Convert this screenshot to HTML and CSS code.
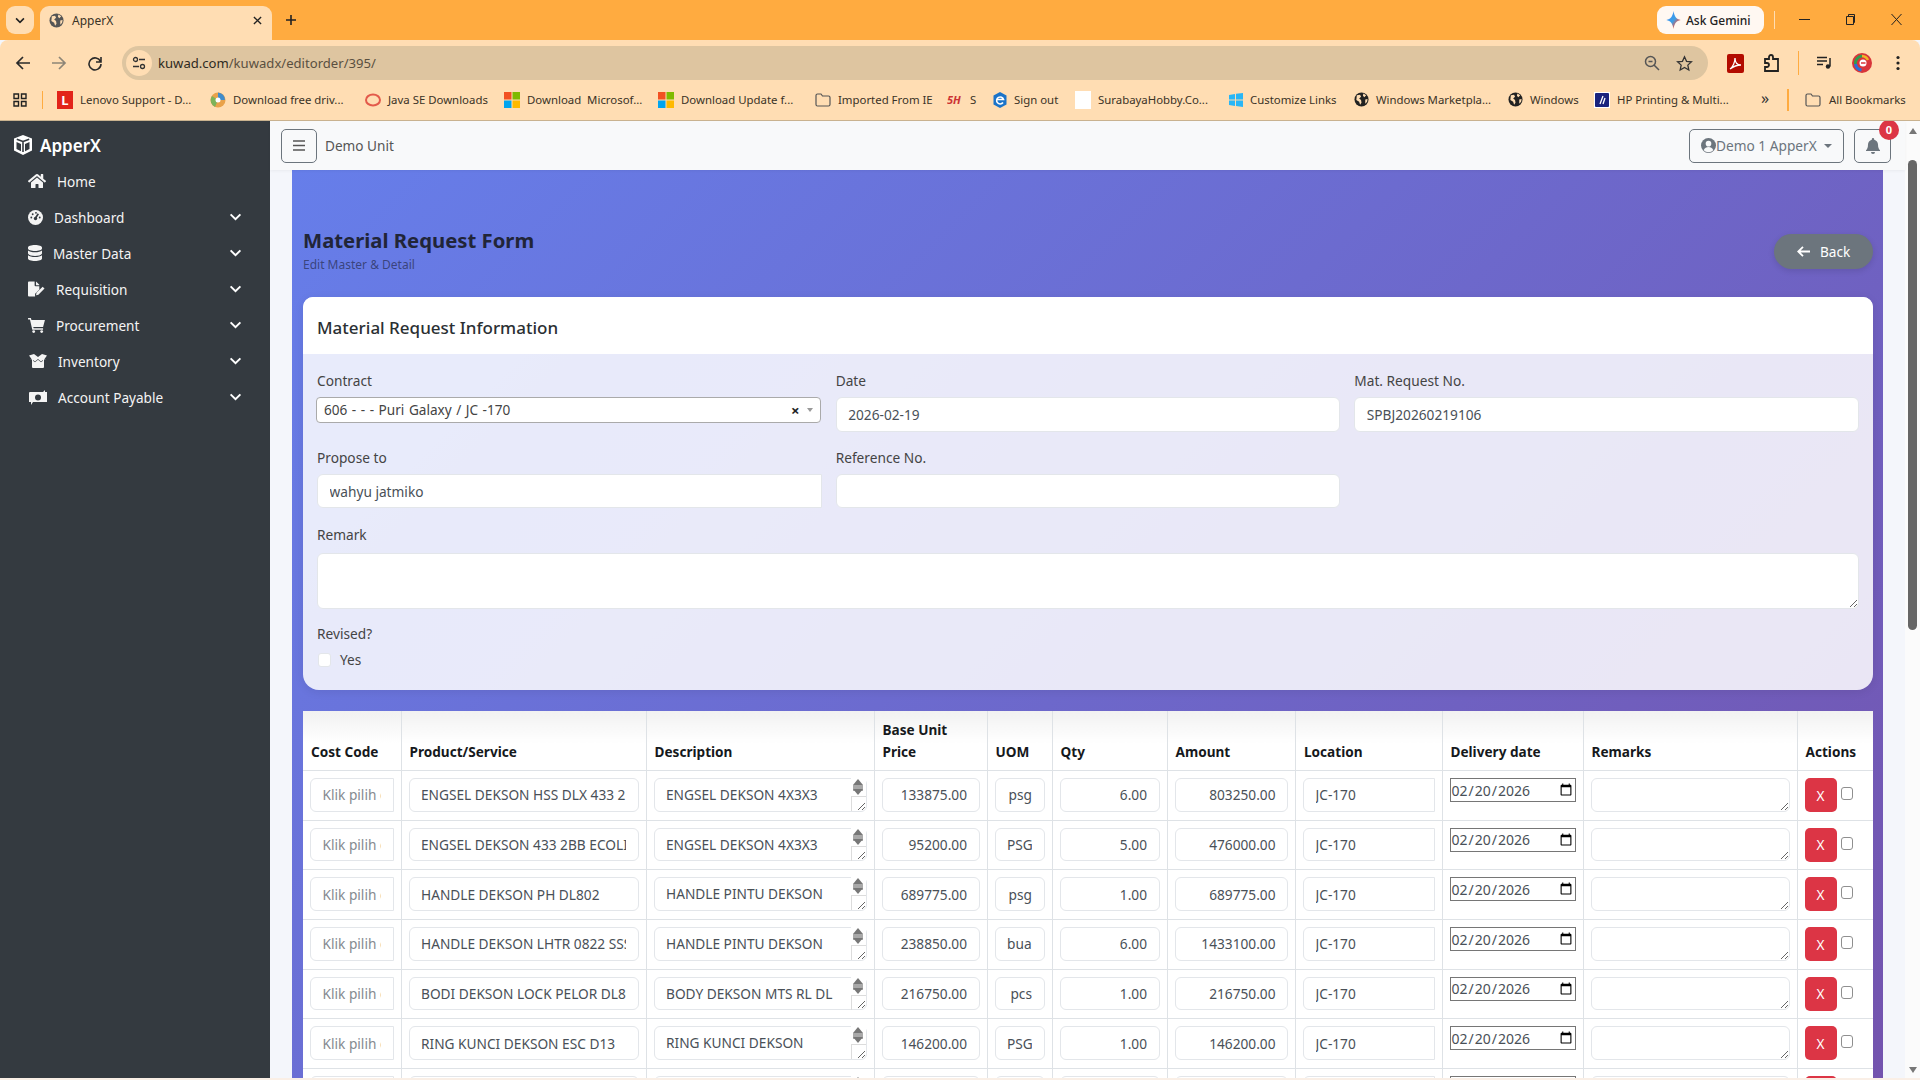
FILE: index.html
```html
<!DOCTYPE html>
<html lang="en">
<head>
<meta charset="utf-8">
<title>ApperX</title>
<link rel="stylesheet" href="styles.css">
</head>
<body>
<svg class="defs" width="0" height="0">
  <symbol id="chev" viewBox="0 0 14 9"><path d="M1.5 1.5 7 7l5.5-5.5" fill="none" stroke="currentColor" stroke-width="2.2"/></symbol>
  <symbol id="globe" viewBox="0 0 16 16"><circle cx="8" cy="8" r="7.5" fill="currentColor"/><path d="M3 3.5 6.5 3l1 2-2 2 2 1.500.5 3-1.500 2-1-3-3-2zM10 1.500l3 2-2 2-1.500-1.500zM12 8l2.500-.5-.5 3-2 2z" fill="#ffddb3"/></symbol>
  <symbol id="ms" viewBox="0 0 16 16"><path fill="#f25022" d="M0 0h7.500v7.500H0z"/><path fill="#7fba00" d="M8.500 0H16v7.500H8.500z"/><path fill="#00a4ef" d="M0 8.500h7.500V16H0z"/><path fill="#ffb900" d="M8.500 8.500H16V16H8.500z"/></symbol>
  <symbol id="folder" viewBox="0 0 16 14"><path d="M1 2.500A1.500 1.500 0 0 1 2.500 1H6l1.500 2h6A1.500 1.500 0 0 1 15 4.500v7a1.500 1.500 0 0 1-1.500 1.500h-11A1.500 1.500 0 0 1 1 11.500z" fill="none" stroke="currentColor" stroke-width="1.200"/></symbol>
</svg>

<header class="tabstrip">
  <button class="tablist" type="button"><svg width="10" height="7" viewBox="0 0 14 9"><use href="#chev"/></svg></button>
  <div class="tab">
    <svg class="tab-fav" width="15" height="15"><use href="#globe"/></svg>
    <span class="tab-title">ApperX</span>
    <svg class="tab-close" width="9" height="9" viewBox="0 0 10 10"><path d="M1 1l8 8M9 1 1 9" stroke="#222" stroke-width="1.500"/></svg>
  </div>
  <svg class="tab-new" width="12" height="12" viewBox="0 0 12 12"><path d="M6 1v10M1 6h10" stroke="#222" stroke-width="1.600"/></svg>
  <div class="gemini">
    <svg width="15" height="18" viewBox="0 0 16 20"><defs><linearGradient id="gem" x1="0" y1="0" x2="1" y2="1"><stop offset="0" stop-color="#4285f4"/><stop offset=".5" stop-color="#3aa0e8"/><stop offset=".75" stop-color="#e8584a"/><stop offset="1" stop-color="#f4b400"/></linearGradient></defs><path d="M8 0c1 6 3 9 8 10-5 1-7 4-8 10-1-6-3-9-8-10 5-1 7-4 8-10z" fill="url(#gem)"/></svg>
    <span>Ask Gemini</span>
  </div>
  <i class="vsep"></i>
  <div class="winctl">
    <svg width="11" height="11" viewBox="0 0 11 11"><path d="M0 5.500h11" stroke="#222"/></svg>
    <svg width="11" height="13" viewBox="0 0 11 13"><path d="M1.500 3.500h7v8h-7zM3.500 3.500v-2h6v8H8.500" fill="none" stroke="#222"/></svg>
    <svg width="11" height="13" viewBox="0 0 11 13"><path d="M.5 1l10 11M10.500 1 .5 12" stroke="#222"/></svg>
  </div>
</header>

<div class="toolbar">
  <svg width="16" height="16" viewBox="0 0 16 16"><path d="M8 2 2 8l6 6M2 8h13" fill="none" stroke="#2a2a2a" stroke-width="1.700"/></svg>
  <svg width="16" height="16" viewBox="0 0 16 16"><path d="m8 2 6 6-6 6M14 8H1" fill="none" stroke="#8d8577" stroke-width="1.700"/></svg>
  <svg width="16" height="16" viewBox="0 0 16 16"><path d="M13.500 6.500A6 6 0 1 0 14 9M14 2v5H9" fill="none" stroke="#2a2a2a" stroke-width="1.600"/></svg>
  <div class="omnibox">
    <span class="tune"><svg width="14" height="14" viewBox="0 0 14 14"><circle cx="3.500" cy="3.500" r="2" fill="none" stroke="#333" stroke-width="1.300"/><circle cx="10.500" cy="10.500" r="2" fill="none" stroke="#333" stroke-width="1.300"/><path d="M7 3.500h6M1 10.500h6" stroke="#333" stroke-width="1.300"/></svg></span>
    <span class="url">kuwad.com<span class="url-path">/kuwadx/editorder/395/</span></span>
    <svg class="omni-zoom" width="16" height="16" viewBox="0 0 16 16"><circle cx="6.500" cy="6.500" r="5" fill="none" stroke="#555" stroke-width="1.500"/><path d="m10 10 5 5M4.500 6.500h4" stroke="#555" stroke-width="1.500"/></svg>
    <svg class="omni-star" width="17" height="17" viewBox="0 0 20 20"><path d="m10 2 2.400 5.400 5.800.6-4.300 3.900 1.200 5.700L10 14.700l-5.100 2.900 1.200-5.700L1.800 8l5.800-.6z" fill="none" stroke="#333" stroke-width="1.500"/></svg>
  </div>
  <div class="tb-right">
    <svg width="17" height="19" viewBox="0 0 17 19"><rect width="17" height="19" rx="2" fill="#b30b00"/><path d="M3 15c3-2 5-7 5-11 0 4 2 7 6 7-4 0-7 1-11 4z" fill="none" stroke="#fff" stroke-width="1.300"/></svg>
    <svg width="17" height="19" viewBox="0 0 17 19"><path d="M2 5h4V3a2 2 0 0 1 4 0v2h5v12H2v-4h2a2 2 0 0 0 0-4H2z" fill="none" stroke="#222" stroke-width="1.800"/></svg>
    <i class="vsep tb-sep"></i>
    <svg width="16" height="14" viewBox="0 0 16 14"><path d="M0 1.500h10M0 5h10M0 8.500h6" stroke="#222" stroke-width="1.500"/><path d="M13 2v8.500" stroke="#222" stroke-width="1.500"/><circle cx="11" cy="10.500" r="2.200" fill="#222"/></svg>
    <svg width="20" height="20" viewBox="0 0 20 20"><circle cx="10" cy="10" r="10" fill="#d8343a"/><path d="M3.500 11A7 7 0 0 1 10 3" stroke="#2e9e4f" stroke-width="3" fill="none"/><path d="M3.500 11a7 7 0 0 0 6 6" stroke="#2b6fd6" stroke-width="3" fill="none"/><path d="M10 3a7 7 0 0 1 6 4" stroke="#f0b429" stroke-width="2.500" fill="none"/><circle cx="11" cy="10" r="3.500" fill="#fff"/><path d="M9 10h4.500" stroke="#d8343a" stroke-width="1.500"/></svg>
    <svg class="tb-menu" width="4" height="16" viewBox="0 0 4 16"><circle cx="2" cy="2.500" r="1.600" fill="#222"/><circle cx="2" cy="8" r="1.600" fill="#222"/><circle cx="2" cy="13.500" r="1.600" fill="#222"/></svg>
  </div>
</div>

<nav class="bookmarks">
  <svg class="bm-apps" width="14" height="14" viewBox="0 0 14 14"><path d="M1 1h4.500v4.500H1zM8.500 1H13v4.500H8.500zM1 8.500h4.500V13H1zM8.500 8.500H13V13H8.500z" fill="none" stroke="#222" stroke-width="1.400"/></svg>
  <i class="vsep bm-sep"></i>
  <div class="bm-grid">
    <a class="bm"><b class="ic-l">L</b>Lenovo Support - D...</a>
    <a class="bm"><svg width="16" height="18" viewBox="0 0 16 18"><circle cx="8" cy="9" r="7.500" fill="#e9a24a"/><path d="M8 1.500A7.500 7.500 0 0 1 15 9L8 9z" fill="#3f8ccc"/><path d="M2 5a7.500 7.500 0 0 0 3 11l3-7z" fill="#7db35a"/><circle cx="8" cy="9" r="2.500" fill="#fff"/></svg>Download free driv...</a>
    <a class="bm"><svg width="16" height="16" viewBox="0 0 16 16"><ellipse cx="8" cy="8" rx="7" ry="5.500" fill="none" stroke="#e35a4b" stroke-width="2"/></svg>Java SE Downloads</a>
    <a class="bm"><svg width="16" height="16"><use href="#ms"/></svg>Download&nbsp; Microsof...</a>
    <a class="bm"><svg width="16" height="16"><use href="#ms"/></svg>Download Update f...</a>
    <a class="bm"><svg width="16" height="14" class="bm-folder"><use href="#folder"/></svg>Imported From IE</a>
    <a class="bm"><b class="ic-s">5H</b>S</a>
    <a class="bm"><svg width="14" height="16" viewBox="0 0 14 16"><path d="M7 0l6.500 3.500v9L7 16 .5 12.500v-9z" fill="#1a73c9"/><path d="M10 10.500A3.500 3.500 0 1 1 10.500 7.500H4" fill="none" stroke="#fff" stroke-width="1.600"/></svg>Sign out</a>
    <a class="bm"><i class="ic-white"></i>SurabayaHobby.Co...</a>
    <a class="bm"><svg width="14" height="14" viewBox="0 0 14 14"><path fill="#29b6f6" d="M0 2l6-1v5.500H0zM7 .8 14 0v6.500H7zM0 7.500h6V13l-6-1zM7 7.500h7V14l-7-1z"/></svg>Customize Links</a>
    <a class="bm"><svg width="15" height="15" class="bm-globe"><use href="#globe"/></svg>Windows Marketpla...</a>
    <a class="bm"><svg width="15" height="15" class="bm-globe"><use href="#globe"/></svg>Windows</a>
    <a class="bm"><svg width="16" height="16" viewBox="0 0 16 16"><rect width="16" height="16" fill="#fff"/><rect x="1" y="1" width="14" height="14" rx="1" fill="#1a237e"/><path d="M6 12 9 4M9 12l2-6" stroke="#fff" stroke-width="1.300"/></svg>HP Printing &amp; Multi...</a>
  </div>
  <span class="bm-more">»</span>
  <i class="vsep bm-sep2"></i>
  <a class="bm bm-all"><svg width="16" height="14"><use href="#folder"/></svg>All Bookmarks</a>
</nav>

<div class="viewport">
  <aside class="sidebar">
    <div class="brand">
      <svg width="18" height="20" viewBox="0 0 18 20"><path d="M9 0l9 3.500v12L9 20l-9-4.500v-12z" fill="#fff"/><path d="M9 6.500 2.800 4.200M9 6.500l6.200-2.300M9 6.500V17" stroke="#343a40" stroke-width="1.600" fill="none"/><path d="M2.500 7v7l4.500 2.300V9zM15.500 7v7L11 16.300V9z" fill="#343a40"/></svg>
      <span>ApperX</span>
    </div>
    <ul class="menu">
      <li class="menu-item"><svg class="mi" width="18" height="16" viewBox="0 0 576 512"><path fill="currentColor" d="M280.370 148.260 96 300.110V464a16 16 0 0 0 16 16l112.060-.29a16 16 0 0 0 15.920-16V368a16 16 0 0 1 16-16h64a16 16 0 0 1 16 16v95.640a16 16 0 0 0 16 16.050L464 480a16 16 0 0 0 16-16V300L295.670 148.260a12.190 12.190 0 0 0-15.300 0zM571.600 251.470 488 182.560V44.050a12 12 0 0 0-12-12h-56a12 12 0 0 0-12 12v72.610L318.470 43a48 48 0 0 0-61 0L4.340 251.470a12 12 0 0 0-1.600 16.900l25.500 31A12 12 0 0 0 45.150 301l235.220-193.740a12.190 12.190 0 0 1 15.300 0L530.900 301a12 12 0 0 0 16.900-1.600l25.500-31a12 12 0 0 0-1.700-16.930z"/></svg><span class="mt">Home</span></li>
      <li class="menu-item"><svg class="mi" width="15" height="15" viewBox="0 0 16 16"><circle cx="8" cy="8" r="8" fill="currentColor"/><path d="M8 8.500 11 4" stroke="#343a40" stroke-width="1.800"/><circle cx="8" cy="9" r="1.800" fill="#343a40"/><circle cx="3.500" cy="8" r="1" fill="#343a40"/><circle cx="5" cy="4.500" r="1" fill="#343a40"/><circle cx="8.500" cy="3" r="1" fill="#343a40"/><circle cx="12.500" cy="8" r="1" fill="#343a40"/></svg><span class="mt">Dashboard</span><svg class="mc" width="13" height="8"><use href="#chev"/></svg></li>
      <li class="menu-item"><svg class="mi" width="14" height="16" viewBox="0 0 14 16"><path fill="currentColor" d="M14 2.500C14 1 11 0 7 0S0 1 0 2.500v1C0 5 3 6 7 6s7-1 7-2.500zM0 5.500v2.800C0 9.800 3 11 7 11s7-1.200 7-2.700V5.500C12.700 6.700 10 7.300 7 7.300S1.300 6.700 0 5.500zM0 10.300v3.200C0 15 3 16 7 16s7-1 7-2.500v-3.200c-1.300 1.100-4 1.800-7 1.800s-5.700-.7-7-1.800z"/></svg><span class="mt">Master Data</span><svg class="mc" width="13" height="8"><use href="#chev"/></svg></li>
      <li class="menu-item"><svg class="mi" width="17" height="16" viewBox="0 0 18 16"><path fill="currentColor" d="M0 1a1 1 0 0 1 1-1h6v4a1 1 0 0 0 1 1h4v3.500L7.500 13v3H1a1 1 0 0 1-1-1zM8.500 0 12 3.500V4H8.500zM17.500 7.500l-6.500 6.500-2.500.5.500-2.500 6.500-6.500z"/></svg><span class="mt">Requisition</span><svg class="mc" width="13" height="8"><use href="#chev"/></svg></li>
      <li class="menu-item"><svg class="mi" width="17" height="15" viewBox="0 0 18 16"><path fill="currentColor" d="M0 0h3l.6 2H18l-2 7.500H5.500L6 11h10v1.500H4.500L2 1.500H0z"/><circle cx="6" cy="14.500" r="1.500" fill="currentColor"/><circle cx="14.500" cy="14.500" r="1.500" fill="currentColor"/></svg><span class="mt">Procurement</span><svg class="mc" width="13" height="8"><use href="#chev"/></svg></li>
      <li class="menu-item"><svg class="mi mi-r" width="18" height="14" viewBox="0 0 18 14"><path fill="currentColor" d="M0 1.500 5 0l4 3 4-3 5 1.500L15.500 5H17v0l-2 .5V13a1 1 0 0 1-1 1H4a1 1 0 0 1-1-1V5.500L1 5h1.500zM9 5 6 7.500 4 6v.8l2 1.500 3-2.500 3 2.500 2-1.500V6l-2 1.500z"/></svg><span class="mt">Inventory</span><svg class="mc" width="13" height="8"><use href="#chev"/></svg></li>
      <li class="menu-item"><svg class="mi mi-r" width="18" height="15" viewBox="0 0 18 15"><path fill="currentColor" d="M1 2h13l2-2v2h2v10H4l-2 3v-3H0V3a1 1 0 0 1 1-1zm8 2.500A3 3 0 1 0 9 10.500a3 3 0 0 0 0-6z"/></svg><span class="mt">Account Payable</span><svg class="mc" width="13" height="8"><use href="#chev"/></svg></li>
    </ul>
  </aside>

  <div class="main">
    <div class="topnav">
      <button class="nav-toggle" type="button"><svg width="12" height="11" viewBox="0 0 12 11"><path d="M0 1h12M0 5.500h12M0 10h12" stroke="#555" stroke-width="1.300"/></svg></button>
      <span class="nav-unit">Demo Unit</span>
      <button class="nav-user" type="button">
        <svg width="15" height="15" viewBox="0 0 16 16"><circle cx="8" cy="8" r="8" fill="#6c757d"/><circle cx="8" cy="6" r="3" fill="#f8f9fa"/><path d="M2.800 13c1-2.500 3-3.500 5.200-3.500s4.200 1 5.200 3.500A7.500 7.500 0 0 1 8 15.200 7.500 7.500 0 0 1 2.800 13z" fill="#f8f9fa"/></svg>
        <span>Demo 1 ApperX</span><i class="caret"></i>
      </button>
      <button class="nav-bell" type="button">
        <svg width="14" height="16" viewBox="0 0 14 16"><path d="M7 0a1.200 1.200 0 0 1 1.200 1.200v.5C10.500 2.300 12 4.200 12 6.500c0 3.500 1 4.800 2 5.800v.7H0v-.7c1-1 2-2.300 2-5.800 0-2.300 1.500-4.200 3.800-4.800v-.5A1.200 1.200 0 0 1 7 0zM5 14h4a2 2 0 0 1-4 0z" fill="#6c757d"/></svg>
        <span class="badge">0</span>
      </button>
    </div>

    <div class="content">
      <div class="hero">
        <div class="hero-head">
          <div>
            <h1 class="hero-title">Material Request Form</h1>
            <p class="hero-sub">Edit Master &amp; Detail</p>
          </div>
          <a class="btn-back"><svg width="13" height="11" viewBox="0 0 13 11"><path d="M6 .8 1.200 5.500 6 10.200M1.500 5.500H13" fill="none" stroke="#fff" stroke-width="1.800"/></svg>Back</a>
        </div>

        <section class="info-card">
          <div class="info-head">Material Request Information</div>
          <div class="info-body">
            <div class="form-grid">
              <div class="field field-1">
                <label class="lbl">Contract</label>
                <div class="select2"><span class="select2-text">606 - - - Puri Galaxy / JC -170</span><b class="select2-x">×</b><i class="select2-arrow"></i></div>
              </div>
              <div class="field field-1">
                <label class="lbl">Date</label>
                <input class="ctl ctl-date" value="2026-02-19">
              </div>
              <div class="field field-1">
                <label class="lbl">Mat. Request No.</label>
                <input class="ctl ctl-date" value="SPBJ20260219106">
              </div>
              <div class="field field-2">
                <label class="lbl">Propose to</label>
                <input class="ctl ctl-flat" value="wahyu jatmiko">
              </div>
              <div class="field field-2">
                <label class="lbl">Reference No.</label>
                <input class="ctl" value="">
              </div>
            </div>
            <div class="field field-remark">
              <label class="lbl lbl-wide">Remark</label>
              <textarea class="ctl ctl-remark"></textarea>
            </div>
            <div class="field">
              <label class="lbl">Revised?</label>
              <div class="check-row"><input class="chk-plain" type="checkbox"><span>Yes</span></div>
            </div>
          </div>
        </section>

        <div class="table-wrap">
          <table class="grid">
            <colgroup><col class="c1"><col class="c2"><col class="c3"><col class="c4"><col class="c5"><col class="c6"><col class="c7"><col class="c8"><col class="c9"><col class="c10"><col class="c11"></colgroup>
            <thead>
              <tr><th>Cost Code</th><th>Product/Service</th><th>Description</th><th>Base Unit Price</th><th>UOM</th><th>Qty</th><th>Amount</th><th>Location</th><th>Delivery date</th><th>Remarks</th><th>Actions</th></tr>
            </thead>
            <tbody>
              <tr>
                <td><input class="ctl cell cell-cut" placeholder="Klik pilih cost code"></td>
                <td><input class="ctl cell" value="ENGSEL DEKSON HSS DLX 433 2BB SS"></td>
                <td><div class="desc"><textarea class="ctl cell cell-desc">ENGSEL DEKSON 4X3X3</textarea><i class="spin"></i></div></td>
                <td><input class="ctl cell num" value="133875.00"></td>
                <td><input class="ctl cell num" value="psg"></td>
                <td><input class="ctl cell num" value="6.00"></td>
                <td><input class="ctl cell num" value="803250.00"></td>
                <td><input class="ctl cell cell-cut" value="JC-170"></td>
                <td><input class="date" type="date" value="2026-02-20"></td>
                <td><textarea class="ctl cell cell-note"></textarea></td>
                <td><div class="acts"><button class="btn-x" type="button">X</button><input class="chk" type="checkbox"></div></td>
              </tr>
              <tr>
                <td><input class="ctl cell cell-cut" placeholder="Klik pilih cost code"></td>
                <td><input class="ctl cell" value="ENGSEL DEKSON 433 2BB ECOLINE"></td>
                <td><div class="desc"><textarea class="ctl cell cell-desc">ENGSEL DEKSON 4X3X3</textarea><i class="spin"></i></div></td>
                <td><input class="ctl cell num" value="95200.00"></td>
                <td><input class="ctl cell num" value="PSG"></td>
                <td><input class="ctl cell num" value="5.00"></td>
                <td><input class="ctl cell num" value="476000.00"></td>
                <td><input class="ctl cell cell-cut" value="JC-170"></td>
                <td><input class="date" type="date" value="2026-02-20"></td>
                <td><textarea class="ctl cell cell-note"></textarea></td>
                <td><div class="acts"><button class="btn-x" type="button">X</button><input class="chk" type="checkbox"></div></td>
              </tr>
              <tr>
                <td><input class="ctl cell cell-cut" placeholder="Klik pilih cost code"></td>
                <td><input class="ctl cell" value="HANDLE DEKSON PH DL802"></td>
                <td><div class="desc"><textarea class="ctl cell cell-desc">HANDLE PINTU DEKSON</textarea><i class="spin"></i></div></td>
                <td><input class="ctl cell num" value="689775.00"></td>
                <td><input class="ctl cell num" value="psg"></td>
                <td><input class="ctl cell num" value="1.00"></td>
                <td><input class="ctl cell num" value="689775.00"></td>
                <td><input class="ctl cell cell-cut" value="JC-170"></td>
                <td><input class="date" type="date" value="2026-02-20"></td>
                <td><textarea class="ctl cell cell-note"></textarea></td>
                <td><div class="acts"><button class="btn-x" type="button">X</button><input class="chk" type="checkbox"></div></td>
              </tr>
              <tr>
                <td><input class="ctl cell cell-cut" placeholder="Klik pilih cost code"></td>
                <td><input class="ctl cell" value="HANDLE DEKSON LHTR 0822 SSS"></td>
                <td><div class="desc"><textarea class="ctl cell cell-desc">HANDLE PINTU DEKSON</textarea><i class="spin"></i></div></td>
                <td><input class="ctl cell num" value="238850.00"></td>
                <td><input class="ctl cell num" value="buah"></td>
                <td><input class="ctl cell num" value="6.00"></td>
                <td><input class="ctl cell num" value="1433100.00"></td>
                <td><input class="ctl cell cell-cut" value="JC-170"></td>
                <td><input class="date" type="date" value="2026-02-20"></td>
                <td><textarea class="ctl cell cell-note"></textarea></td>
                <td><div class="acts"><button class="btn-x" type="button">X</button><input class="chk" type="checkbox"></div></td>
              </tr>
              <tr>
                <td><input class="ctl cell cell-cut" placeholder="Klik pilih cost code"></td>
                <td><input class="ctl cell" value="BODI DEKSON LOCK PELOR DL80"></td>
                <td><div class="desc"><textarea class="ctl cell cell-desc">BODY DEKSON MTS RL DL</textarea><i class="spin"></i></div></td>
                <td><input class="ctl cell num" value="216750.00"></td>
                <td><input class="ctl cell num" value="pcs"></td>
                <td><input class="ctl cell num" value="1.00"></td>
                <td><input class="ctl cell num" value="216750.00"></td>
                <td><input class="ctl cell cell-cut" value="JC-170"></td>
                <td><input class="date" type="date" value="2026-02-20"></td>
                <td><textarea class="ctl cell cell-note"></textarea></td>
                <td><div class="acts"><button class="btn-x" type="button">X</button><input class="chk" type="checkbox"></div></td>
              </tr>
              <tr>
                <td><input class="ctl cell cell-cut" placeholder="Klik pilih cost code"></td>
                <td><input class="ctl cell" value="RING KUNCI DEKSON ESC D13"></td>
                <td><div class="desc"><textarea class="ctl cell cell-desc">RING KUNCI DEKSON</textarea><i class="spin"></i></div></td>
                <td><input class="ctl cell num" value="146200.00"></td>
                <td><input class="ctl cell num" value="PSG"></td>
                <td><input class="ctl cell num" value="1.00"></td>
                <td><input class="ctl cell num" value="146200.00"></td>
                <td><input class="ctl cell cell-cut" value="JC-170"></td>
                <td><input class="date" type="date" value="2026-02-20"></td>
                <td><textarea class="ctl cell cell-note"></textarea></td>
                <td><div class="acts"><button class="btn-x" type="button">X</button><input class="chk" type="checkbox"></div></td>
              </tr>
              <tr>
                <td><input class="ctl cell cell-cut"></td>
                <td><input class="ctl cell"></td>
                <td><div class="desc"><textarea class="ctl cell cell-desc"></textarea><i class="spin"></i></div></td>
                <td><input class="ctl cell num"></td>
                <td><input class="ctl cell num"></td>
                <td><input class="ctl cell num"></td>
                <td><input class="ctl cell num"></td>
                <td><input class="ctl cell cell-cut"></td>
                <td><input class="date" type="date"></td>
                <td><textarea class="ctl cell cell-note"></textarea></td>
                <td><div class="acts"><button class="btn-x" type="button"></button><input class="chk" type="checkbox"></div></td>
              </tr>
            </tbody>
          </table>
        </div>
      </div>
    </div>
  </div>

  <div class="scrollbar">
    <i class="sb-up"></i>
    <i class="sb-thumb"></i>
    <i class="sb-down"></i>
  </div>
</div>
<div class="bottom-strip"></div>
</body>
</html>
```

FILE: styles.css
```css
* { box-sizing: border-box; }
html, body { margin: 0; height: 1080px; overflow: hidden; }
body { display: flex; flex-direction: column; font-family: "Noto Sans", "Open Sans", sans-serif; font-size: 13.600px; color: #212529; background: #f4f6fb; }
.defs { position: absolute; }
i, b { font-style: normal; }

/* browser chrome */
.tabstrip { height: 40px; flex: none; background: #ffab40; display: flex; align-items: flex-start; padding-top: 6px; padding-left: 6px; }
.tablist { width: 28px; height: 28px; margin: 0; padding: 0; border: 0; border-radius: 9px; background: #ffddb3; display: flex; align-items: center; justify-content: center; color: #222; }
.tab { width: 232px; height: 34px; margin-left: 6px; background: #ffddb3; border-radius: 9px 9px 0 0; display: flex; align-items: center; padding: 0 10px 6px 9px; }
.tab-fav { color: #555; flex: none; }
.tab-title { font-size: 12px; margin-left: 8px; flex: 1; color: #3a3226; }
.tab-new { margin: 8px 0 0 13px; }
.gemini { margin-left: auto; width: 107px; height: 28px; background: #fff8f2; border-radius: 9px; display: flex; align-items: center; padding-left: 9px; gap: 5px; font-size: 12px; font-weight: 500; color: #222; }
.vsep { display: block; width: 1px; background: #ffddb3; flex: none; }
.tabstrip .vsep { height: 18px; margin: 5px 0 0 10px; }
.winctl { width: 145px; height: 26px; display: flex; align-items: center; justify-content: space-between; padding: 0 18px 0 24px; }

.toolbar { height: 40px; flex: none; background: #ffddb3; display: flex; align-items: flex-start; padding: 6px 0 0 15px; gap: 20px; border-radius: 8px 8px 0 0; }
.toolbar > svg { margin-top: 9px; flex: none; }
.omnibox { width: 1586px; height: 34px; margin-left: -1px; background: #dec5a0; border-radius: 17px; display: flex; align-items: center; padding: 0 15px 0 4px; }
.tune { width: 26px; height: 26px; border-radius: 50%; background: #ffddb3; display: flex; align-items: center; justify-content: center; flex: none; }
.url { margin-left: 6px; font-size: 13.100px; color: #2e2a22; flex: 1; }
.url-path { color: #5a5040; }
.omni-star { margin-left: 16px; }
.tb-right { display: flex; align-items: center; height: 34px; margin-left: -1.500px; gap: 19px; }
.tb-sep { height: 24px; background: #ffab40; margin: 0 -1px; }
.tb-menu { margin-left: 5px; }

.bookmarks { height: 41px; flex: none; background: #ffddb3; border-bottom: 1px solid #c9b28f; display: flex; align-items: center; padding: 0 0 1px 13px; font-size: 11.400px; color: #3a3226; white-space: nowrap; }
.bm-sep { height: 18px; background: #ffab40; margin: 0 14px 0 15px; }
.bm-grid { display: grid; grid-template-columns: 153px 155px 139px 154px 157px 132px 46px 82px 154px 125px 154px 86px 165px; }
.bm { display: flex; align-items: center; gap: 7px; overflow: hidden; }
.bm svg { flex: none; }
.ic-l { width: 16px; height: 18px; background: #e2231a; color: #fff; font-size: 13px; font-weight: 700; display: flex; align-items: center; justify-content: center; flex: none; }
.ic-s { width: 16px; color: #c33; font-style: italic; font-size: 11px; font-weight: 700; flex: none; }
.ic-white { width: 16px; height: 18px; background: #fff; flex: none; }
.bm-folder { color: #555; }
.bm-globe { color: #222; }
.bm-more { width: 26px; margin-left: 2px; font-size: 16px; color: #333; margin-top: -3px; }
.bm-sep2 { height: 22px; width: 2px; background: #ffab40; margin-right: 16px; }
.bm-all { color: #3a3226; gap: 8px; }
.bm-all svg { color: #555; }

/* app */
.viewport { flex: 1; min-height: 0; display: flex; overflow: hidden; background: #f4f6fb; }
.sidebar { width: 270px; flex: none; background: #343a40; color: #f4f4f4; }
.brand { height: 43px; padding: 5px 0 0 14px; display: flex; align-items: center; gap: 8px; font-size: 17px; font-weight: 600; color: #fff; }
.menu { list-style: none; margin: -1px 0 0; padding: 0 0 0 28px; }
.menu-item { height: 36px; display: flex; align-items: center; padding-right: 28px; font-size: 13.600px; }
.mi { flex: none; }
.mi-r { margin-left: 1px; }
.mt { margin-left: 11px; flex: 1; }
.mc { flex: none; color: #fff; }

.main { flex: 1; min-width: 0; display: flex; flex-direction: column; }
.topnav { height: 49px; flex: none; background: #f8f9fa; display: flex; align-items: center; padding: 0 14px 0 11px; box-shadow: 0 1px 3px rgba(0,0,0,.05); position: relative; z-index: 1; }
button { font-family: inherit; }
.nav-toggle { width: 36px; height: 34px; background: none; border: 1px solid #6c757d; border-radius: 5px; padding: 0; display: flex; align-items: center; justify-content: center; }
.nav-unit { margin-left: 8px; color: #555; font-size: 13.600px; }
.nav-user { margin-left: auto; width: 155px; height: 34px; background: none; border: 1px solid #6c757d; border-radius: 5px; color: #6c757d; font-size: 13.700px; display: flex; align-items: center; padding: 0 0 0 11px; }
.caret { width: 0; height: 0; margin-left: 7px; border: 4px solid transparent; border-top-color: #6c757d; border-bottom: 0; }
.nav-bell { position: relative; width: 37px; height: 34px; margin-left: 10px; background: none; border: 1px solid #6c757d; border-radius: 5px; padding: 0; display: flex; align-items: center; justify-content: center; }
.badge { position: absolute; top: -10px; right: -9px; width: 20px; height: 20px; border-radius: 50%; background: #dc3545; color: #fff; font-size: 11px; font-weight: 700; display: flex; align-items: center; justify-content: center; }

.content { flex: 1; min-height: 0; padding: 0 22px; overflow: hidden; }
.hero { min-height: 1400px; padding: 57px 10px 20px 11px; background: linear-gradient(135deg, #667eea 0%, #764ba2 100%); }
.hero-head { display: flex; align-items: center; justify-content: space-between; margin-bottom: 25px; }
.hero-title { margin: 0; font-size: 20.300px; line-height: 26px; font-weight: 700; color: #212538; }
.hero-sub { margin: 4px 0 0; font-size: 12px; line-height: 15px; color: rgba(31,36,64,.65); }
.btn-back { width: 99px; height: 35px; margin-top: 4px; border-radius: 18px; background: #6c757d; color: #fff; font-size: 13.600px; display: flex; align-items: center; gap: 10px; padding-left: 23px; box-shadow: 0 2px 6px rgba(0,0,0,.12); }

.info-card { border-radius: 10px 10px 16px 16px; overflow: hidden; background: rgba(255,255,255,.85); box-shadow: 0 2px 10px rgba(0,0,0,.08); }
.info-head { height: 57px; background: #fff; display: flex; align-items: center; padding: 4px 0 0 14px; font-size: 17px; font-weight: 500; color: #2b2f33; }
.info-body { padding: 15.500px 14px 0; height: 336px; }
.form-grid { display: grid; grid-template-columns: repeat(3, 1fr); column-gap: 14px; }
.field { margin-bottom: 15px; }
.field-1 { height: 62.500px; }
.field-2 { margin-bottom: 16px; }
.field-remark { margin-bottom: 14px; }
.lbl { display: block; height: 21px; line-height: 21px; margin-bottom: 6px; color: #444; font-size: 13.700px; }
.lbl-wide { margin-bottom: 8px; }
.ctl { display: block; width: 100%; height: 34px; padding: 6px 11.500px; border: 1px solid #e3e6ea; border-radius: 6px; background: #fff; font: 13.700px/20px "Noto Sans", "Open Sans", sans-serif; color: #495057; outline: 0; }
.ctl::placeholder { color: #858a90; }
.ctl-date { height: 35px; }
.ctl-flat { border-radius: 6px 0 0 6px; }
.ctl-remark { height: 56px; resize: both; width: 100%; max-width: 100%; }
.select2 { height: 26px; margin: 0 1px 0 -1px; border: 1px solid #aaa; border-radius: 4px; background: #fff; display: flex; align-items: center; padding: 0 5px 0 7px; color: #444; }
.select2-text { flex: 1; word-spacing: 1px; }
.select2-x { font-size: 15px; color: #222; font-weight: 700; margin-right: 7px; }
.select2-arrow { width: 0; height: 0; border: 3.500px solid transparent; border-top: 4px solid #999; border-bottom: 0; margin-right: 2px; }
.check-row { display: flex; align-items: center; gap: 9px; margin-top: 5px; color: #444; }
.chk-plain { appearance: none; width: 13px; height: 14px; margin: 0 0 0 1px; background: #fff; border: 1px solid #e3e6ea; border-radius: 3px; }

.table-wrap { margin-top: 21px; background: #fff; }
.grid { width: 1570px; table-layout: fixed; border-collapse: collapse; }
.c1 { width: 98px; } .c2 { width: 245px; } .c3 { width: 228px; } .c4 { width: 113px; } .c5 { width: 65px; } .c6 { width: 115px; } .c7 { width: 128.500px; } .c8 { width: 146.500px; } .c9 { width: 141px; } .c10 { width: 214px; } .c11 { width: 76px; }
.grid th { height: 59px; padding: 8px 7px 7px 8px; text-align: left; vertical-align: bottom; font-size: 13.600px; line-height: 22px; font-weight: 700; color: #16191c; background: linear-gradient(180deg, #f1f1f1 0%, #fff 55%); border: 1px solid #dee2e6; border-top: 0; }
.grid th:first-child, .grid td:first-child { border-left: 0; }
.grid th:last-child, .grid td:last-child { border-right: 0; }
.grid td { height: 49.700px; padding: 7px; vertical-align: top; border: 1px solid #dee2e6; }
.cell { height: 33.500px; }
.cell-cut { border-radius: 6px 0 0 6px; }
.num { text-align: right; }
textarea.cell { resize: vertical; overflow: hidden; }
.cell-note { width: 100%; }
.desc { position: relative; }
.spin { position: absolute; right: 1px; top: 0; width: 15px; height: 33px; pointer-events: none; background:
  linear-gradient(#a9a9a9, #a9a9a9) center 7px / 10px 6px no-repeat,
  linear-gradient(#fff, #fff) top / 100% 18px no-repeat,
  linear-gradient(#dcdcdc, #dcdcdc) 0 18px / 100% 1px no-repeat,
  linear-gradient(#dcdcdc, #dcdcdc) 0 18px / 1px 15px no-repeat; }
.spin::before { content: ""; position: absolute; left: 2.500px; top: 1px; width: 0; height: 0; border: 5px solid transparent; border-top: 0; border-bottom: 6px solid #777; }
.spin::after { content: ""; position: absolute; left: 2.500px; top: 11px; width: 0; height: 0; border: 5px solid transparent; border-bottom: 0; border-top: 6px solid #777; }
.date { display: block; width: 126px; height: 24px; padding: 1px 0; border: 1px solid #767676; background: #fff; font: 14px "Noto Sans", "Open Sans", sans-serif; color: #495057; }
.acts { display: flex; align-items: flex-start; gap: 4px; }
.btn-x { width: 32px; height: 34px; flex: none; background: #dc3545; border: 0; border-radius: 5px; color: #fff; font-size: 13.600px; padding: 0; }
.chk { appearance: none; width: 12px; height: 13px; margin: 9px 0 0; background: #fff; border: 1px solid #8f8f8f; border-radius: 3px; flex: none; }

.scrollbar { width: 15px; flex: none; background: #fbfbfb; position: relative; display: flex; flex-direction: column; align-items: center; padding: 7px 0 5px; }
.sb-up { width: 0; height: 0; border: 4.500px solid transparent; border-top: 0; border-bottom: 6px solid #777; }
.sb-thumb { width: 9px; height: 470px; margin-top: 26px; border-radius: 5px; background: #666; }
.sb-down { width: 0; height: 0; margin-top: auto; border: 4.500px solid transparent; border-bottom: 0; border-top: 6px solid #777; }
.bottom-strip { height: 2px; flex: none; background: #faefe6; }
```
